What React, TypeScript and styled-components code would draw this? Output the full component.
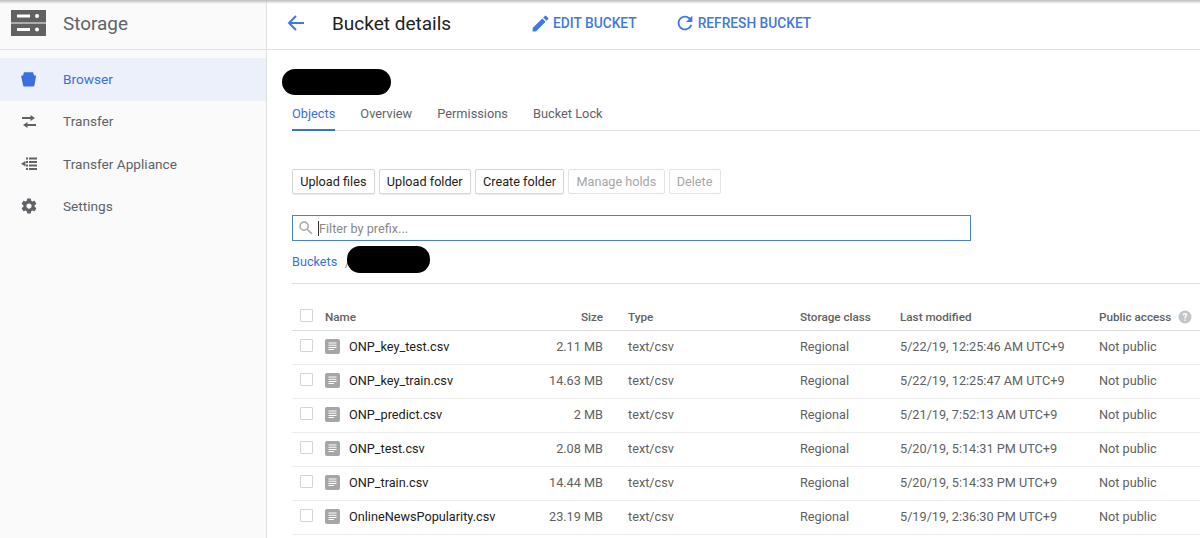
import React from "react";
import styled, { createGlobalStyle } from "styled-components";

const Global = createGlobalStyle`
  html, body { margin: 0; padding: 0; height: 100%; background: #fff; overflow: hidden; }
  body { font-family: Roboto, "Liberation Sans", sans-serif; -webkit-font-smoothing: antialiased; }
  * { box-sizing: border-box; }
`;

const Page = styled.div`
  display: flex;
  width: 1200px;
  height: 538px;
  overflow: hidden;
  position: relative;
  &::before {
    content: "";
    position: absolute;
    inset: 0 0 auto 0;
    height: 4px;
    background: linear-gradient(#bdbdbd, rgba(255, 255, 255, 0));
  }
`;

const Sidebar = styled.aside`
  width: 267px;
  flex: none;
  background: #fafafa;
  border-right: 1px solid #e0e0e0;
`;

const SideHead = styled.div`
  height: 50px;
  display: flex;
  align-items: center;
  gap: 17px;
  padding: 0 0 3px 11px;
  border-bottom: 1px solid #e0e0e0;
  font-size: 18.9px;
  color: #5f6368;
`;

const SideNav = styled.nav`
  display: flex;
  flex-direction: column;
  padding-top: 8px;
`;

const SideItem = styled.div<{ $active?: boolean }>`
  height: 42.5px;
  display: flex;
  align-items: center;
  gap: 25px;
  padding: 0 0 1px 20px;
  font-size: 13.65px;
  color: ${(p) => (p.$active ? "#3b6fdc" : "#5f6368")};
  background: ${(p) => (p.$active ? "#ebf0fa" : "transparent")};
`;

const Main = styled.main`
  flex: 1;
  min-width: 0;
`;

const TopBar = styled.header`
  height: 50px;
  display: flex;
  align-items: center;
  padding: 0 0 3px 19px;
  border-bottom: 1px solid #e0e0e0;
`;

const Title = styled.h1`
  margin: 0 79px 0 26px;
  font-size: 19px;
  font-weight: 400;
  color: #202124;
  white-space: nowrap;
`;

const TopAction = styled.div`
  display: flex;
  align-items: center;
  gap: 2px;
  margin-right: 37px;
  font-size: 13.75px;
  font-weight: 500;
  color: #3f78e0;
  white-space: nowrap;
`;

const Content = styled.div`
  padding: 19px 0 0 25px;
`;

const Redacted = styled.div<{ $w: number; $h: number }>`
  width: ${(p) => p.$w}px;
  height: ${(p) => p.$h}px;
  border-radius: 13px;
  background: #000;
  flex: none;
`;

const TitleBlot = styled(Redacted)`
  margin-left: -10px;
`;

const Tabs = styled.div`
  display: flex;
  gap: 25px;
  height: 36px;
  border-bottom: 1px solid #e0e0e0;
`;

const Tab = styled.div<{ $active?: boolean }>`
  height: 36px;
  padding-top: 10px;
  font-size: 12.8px;
  line-height: 17px;
  color: ${(p) => (p.$active ? "#3b6fdc" : "#5f6368")};
  border-bottom: ${(p) => (p.$active ? "2px solid #3b6fdc" : "none")};
`;

const Buttons = styled.div`
  display: flex;
  gap: 4px;
  margin-top: 38px;
`;

const Btn = styled.div<{ $disabled?: boolean }>`
  height: 25px;
  display: flex;
  align-items: center;
  padding: 0 7.2px;
  font-size: 12.7px;
  background: #fff;
  color: ${(p) => (p.$disabled ? "#a6a6a6" : "#212121")};
  border: 1px solid ${(p) => (p.$disabled ? "#e3e3e3" : "#d6d6d6")};
  border-radius: 2px;
  box-shadow: ${(p) => (p.$disabled ? "none" : "0 1px 1px rgba(0,0,0,.08)")};
  white-space: nowrap;
`;

const Filter = styled.div`
  width: 679px;
  height: 26px;
  margin-top: 21px;
  display: flex;
  align-items: center;
  padding-left: 4px;
  gap: 3px;
  border: 1px solid #4a7fe0;
  font-size: 12.7px;
  color: #8a8a8a;
`;

const Caret = styled.span`
  width: 1px;
  height: 15px;
  background: #333;
  margin-right: -3px;
`;

const Crumbs = styled.div`
  display: flex;
  align-items: center;
  height: 27px;
  margin-top: 5px;
  font-size: 12.7px;
  color: #3b6fdc;
`;

const CrumbLabel = styled.span`
  padding-top: 3px;
  width: 53px;
`;

const CrumbSlash = styled.span`
  width: 2px;
  padding-top: 5px;
  color: #8a8a8a;
`;

const Divider = styled.div`
  height: 1px;
  margin-top: 10px;
  background: #e0e0e0;
`;

const Table = styled.div`
  margin-top: 16px;
  width: 908px;
`;

const Row = styled.div<{ $head?: boolean }>`
  display: grid;
  grid-template-columns: 33px 24px 154px 125px 172px 100px 199px 101px;
  align-items: center;
  height: ${(p) => (p.$head ? 31 : 34)}px;
  padding: ${(p) => (p.$head ? "3px 0 0" : "0 0 2px")};
  font-size: ${(p) => (p.$head ? 11.7 : 12.7)}px;
  font-weight: ${(p) => (p.$head ? 500 : 400)};
  color: #616161;
  border-bottom: 1px solid ${(p) => (p.$head ? "#dcdcdc" : "#ececec")};
`;

const Check = styled.span`
  width: 13px;
  height: 13px;
  margin: -2px 0 0 8px;
  border: 1px solid #d5d5d5;
  border-radius: 1px;
  background: #fff;
`;

const HeadName = styled.span`
  grid-column: span 2;
  white-space: nowrap;
`;

const FileName = styled.span`
  color: #212121;
  white-space: nowrap;
`;

const SizeCell = styled.span`
  text-align: right;
  padding-right: 25px;
  white-space: nowrap;
`;

const Cell = styled.span`
  white-space: nowrap;
`;

const HeadHelp = styled.span`
  display: inline-flex;
  align-items: center;
  gap: 7px;
  white-space: nowrap;
`;

const StorageLogo = () => (
  <svg width="35" height="26" viewBox="0 0 35 26">
    <path fill="#616161" d="M0 0h35v12.500H0zM0 13.500h35V26H0z" />
    <path fill="#fff" d="M6 4.500h13v3H6zM6 18h13v3H6z" />
    <circle cx="26" cy="6" r="2" fill="#fff" />
    <circle cx="26" cy="19.500" r="2" fill="#fff" />
  </svg>
);

const BucketIcon = () => (
  <svg width="18" height="18" viewBox="0 0 18 18">
    <path fill="#3b6fdc" d="M4 2.200h9l1.200 3.300h1c.5 0 .9.400.8 1L14.500 15c-.1.900-.7 1.500-1.500 1.500H4.500c-.8 0-1.400-.6-1.500-1.500L1.200 6.500c-.1-.6.300-1 .8-1h1z" />
  </svg>
);

const TransferIcon = () => (
  <svg width="18" height="18" viewBox="0 0 18 18">
    <path fill="#5f6368" d="M2 5h8.500V3L15 6l-4.500 3V7H2zM16 12H7.500v-2L3 13l4.500 3v-2H16z" />
  </svg>
);

const ApplianceIcon = () => (
  <svg width="18" height="18" viewBox="0 0 18 18">
    <path fill="#5f6368" d="M6 2.500h2v2H6zM9 2.500h8v2H9zM6 6h2v2H6zM9 6h8v2H9zM6 9.500h2v2H6zM9 9.500h8v2H9zM6 13h2v2H6zM9 13h8v2H9zM5.500 6 1 8.700l4.500 2.800z" />
  </svg>
);

const GearIcon = () => (
  <svg width="18" height="18" viewBox="0 0 24 24">
    <path fill="#5f6368" d="M19.430 12.980c.04-.32.07-.64.07-.98s-.03-.66-.07-.98l2.110-1.650c.19-.15.24-.42.12-.64l-2-3.460c-.12-.22-.39-.3-.61-.22l-2.490 1c-.52-.4-1.080-.73-1.690-.98l-.38-2.650C14.460 2.180 14.250 2 14 2h-4c-.25 0-.46.18-.49.42l-.38 2.650c-.61.25-1.170.59-1.690.98l-2.490-1c-.23-.09-.49 0-.61.22l-2 3.460c-.13.22-.07.49.12.64l2.110 1.650c-.04.32-.07.65-.07.98s.03.66.07.98l-2.110 1.650c-.19.15-.24.42-.12.64l2 3.460c.12.22.39.3.61.22l2.490-1c.52.4 1.080.73 1.690.98l.38 2.650c.03.24.24.42.49.42h4c.25 0 .46-.18.49-.42l.38-2.650c.61-.25 1.170-.59 1.690-.98l2.490 1c.23.09.49 0 .61-.22l2-3.460c.12-.22.07-.49-.12-.64l-2.110-1.650zM12 15.500c-1.930 0-3.500-1.570-3.500-3.500s1.570-3.500 3.500-3.500 3.500 1.570 3.500 3.500-1.570 3.500-3.500 3.500z" />
  </svg>
);

const BackIcon = () => (
  <svg width="20" height="20" viewBox="0 0 20 20">
    <path fill="none" stroke="#3f78e0" strokeWidth="2" d="M18 10H3M10 3l-7 7 7 7" />
  </svg>
);

const EditIcon = () => (
  <svg width="21" height="21" viewBox="0 0 24 24">
    <path fill="#3f78e0" d="M3 17.250V21h3.750L17.810 9.940l-3.750-3.750L3 17.250zM20.710 7.040a1 1 0 0 0 0-1.410l-2.340-2.340a1 1 0 0 0-1.410 0l-1.830 1.830 3.750 3.750 1.830-1.830z" />
  </svg>
);

const RefreshIcon = () => (
  <svg width="22" height="22" viewBox="0 0 24 24">
    <path fill="#3f78e0" d="M17.650 6.350A7.958 7.958 0 0 0 12 4c-4.420 0-7.990 3.580-7.990 8s3.570 8 7.990 8c3.730 0 6.840-2.550 7.730-6h-2.080A5.990 5.990 0 0 1 12 18c-3.310 0-6-2.690-6-6s2.690-6 6-6c1.660 0 3.140.69 4.220 1.780L13 11h7V4l-2.350 2.350z" />
  </svg>
);

const SearchIcon = () => (
  <svg width="18" height="18" viewBox="0 0 24 24">
    <path fill="#a8a8a8" d="M15.500 14h-.79l-.28-.27A6.471 6.471 0 0 0 16 9.500 6.500 6.500 0 1 0 9.500 16c1.610 0 3.090-.59 4.230-1.570l.27.28v.79l5 4.990L20.490 19l-4.990-5zm-6 0C7.010 14 5 11.990 5 9.500S7.010 5 9.500 5 14 7.010 14 9.500 11.990 14 9.500 14z" />
  </svg>
);

const FileIcon = () => (
  <svg width="15" height="15" viewBox="0 0 15 15">
    <rect width="15" height="15" rx="2" fill="#a6a6a6" />
    <path fill="#fff" d="M3.500 3.500h8v1h-8zM3.500 5.700h8v1h-8zM3.500 7.900h8v1h-8zM3.500 10.100h5.500v1H3.500z" />
  </svg>
);

const HelpIcon = () => (
  <svg width="14" height="14" viewBox="0 0 14 14">
    <circle cx="7" cy="7" r="6.500" fill="#c4c4c4" />
    <text x="7" y="10.500" textAnchor="middle" fontSize="10" fontWeight="700" fill="#fff" fontFamily="Roboto, sans-serif">?</text>
  </svg>
);

const nav = [
  { label: "Browser", icon: <BucketIcon />, active: true },
  { label: "Transfer", icon: <TransferIcon /> },
  { label: "Transfer Appliance", icon: <ApplianceIcon /> },
  { label: "Settings", icon: <GearIcon /> },
];

const files = [
  ["ONP_key_test.csv", "2.11 MB", "5/22/19, 12:25:46 AM UTC+9"],
  ["ONP_key_train.csv", "14.63 MB", "5/22/19, 12:25:47 AM UTC+9"],
  ["ONP_predict.csv", "2 MB", "5/21/19, 7:52:13 AM UTC+9"],
  ["ONP_test.csv", "2.08 MB", "5/20/19, 5:14:31 PM UTC+9"],
  ["ONP_train.csv", "14.44 MB", "5/20/19, 5:14:33 PM UTC+9"],
  ["OnlineNewsPopularity.csv", "23.19 MB", "5/19/19, 2:36:30 PM UTC+9"],
];

export default function App() {
  return (
    <Page>
      <Global />
      <Sidebar>
        <SideHead>
          <StorageLogo />
          Storage
        </SideHead>
        <SideNav>
          {nav.map((n) => (
            <SideItem key={n.label} $active={n.active}>
              {n.icon}
              {n.label}
            </SideItem>
          ))}
        </SideNav>
      </Sidebar>
      <Main>
        <TopBar>
          <BackIcon />
          <Title>Bucket details</Title>
          <TopAction>
            <EditIcon />
            EDIT BUCKET
          </TopAction>
          <TopAction>
            <RefreshIcon />
            REFRESH BUCKET
          </TopAction>
        </TopBar>
        <Content>
          <TitleBlot $w={109} $h={26} />
          <Tabs>
            <Tab $active>Objects</Tab>
            <Tab>Overview</Tab>
            <Tab>Permissions</Tab>
            <Tab>Bucket Lock</Tab>
          </Tabs>
          <Buttons>
            <Btn>Upload files</Btn>
            <Btn>Upload folder</Btn>
            <Btn>Create folder</Btn>
            <Btn $disabled>Manage holds</Btn>
            <Btn $disabled>Delete</Btn>
          </Buttons>
          <Filter>
            <SearchIcon />
            <Caret />
            Filter by prefix...
          </Filter>
          <Crumbs>
            <CrumbLabel>Buckets</CrumbLabel>
            <CrumbSlash>/</CrumbSlash>
            <Redacted $w={83} $h={27} />
          </Crumbs>
          <Divider />
          <Table>
            <Row $head>
              <Check />
              <HeadName>Name</HeadName>
              <SizeCell>Size</SizeCell>
              <Cell>Type</Cell>
              <Cell>Storage class</Cell>
              <Cell>Last modified</Cell>
              <HeadHelp>
                Public access
                <HelpIcon />
              </HeadHelp>
            </Row>
            {files.map(([name, size, date]) => (
              <Row key={name}>
                <Check />
                <FileIcon />
                <FileName>{name}</FileName>
                <SizeCell>{size}</SizeCell>
                <Cell>text/csv</Cell>
                <Cell>Regional</Cell>
                <Cell>{date}</Cell>
                <Cell>Not public</Cell>
              </Row>
            ))}
          </Table>
        </Content>
      </Main>
    </Page>
  );
}
